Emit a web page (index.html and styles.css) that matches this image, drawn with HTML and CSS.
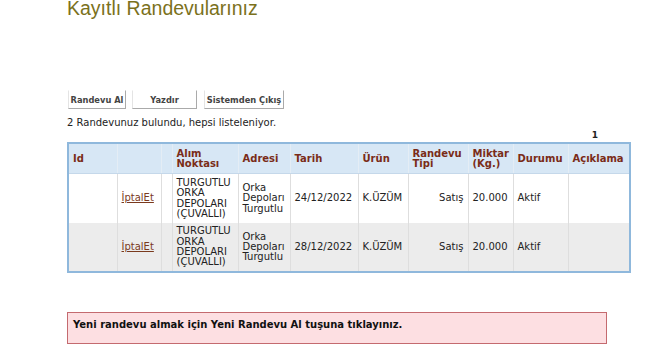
FILE: index.html
```html
<!DOCTYPE html>
<html lang="tr">
<head>
<meta charset="utf-8">
<link rel="stylesheet" href="styles.css">
</head>
<body>
<div class="page">
  <h1 class="title">Kayıtlı Randevularınız</h1>
  <div class="buttons">
    <button class="btn b1">Randevu Al</button>
    <button class="btn b2">Yazdır</button>
    <button class="btn b3">Sistemden Çıkış</button>
  </div>
  <div class="info">2 Randevunuz bulundu, hepsi listeleniyor.</div>
  <div class="pager"><span>1</span></div>
  <table class="grid">
    <colgroup>
      <col class="c1"><col class="c2"><col class="c3"><col class="c4"><col class="c5"><col class="c6"><col class="c7"><col class="c8"><col class="c9"><col class="c10"><col class="c11">
    </colgroup>
    <thead>
      <tr>
        <th>Id</th><th></th><th></th><th>Alım<br>Noktası</th><th>Adresi</th><th>Tarih</th><th>Ürün</th><th>Randevu<br>Tipi</th><th>Miktar<br>(Kg.)</th><th>Durumu</th><th>Açıklama</th>
      </tr>
    </thead>
    <tbody>
      <tr>
        <td></td><td><a href="#">İptalEt</a></td><td></td><td>TURGUTLU<br>ORKA<br>DEPOLARI<br>(ÇUVALLI)</td><td>Orka<br>Depoları<br>Turgutlu</td><td>24/12/2022</td><td>K.ÜZÜM</td><td class="r">Satış</td><td>20.000</td><td>Aktif</td><td></td>
      </tr>
      <tr class="alt">
        <td></td><td><a href="#">İptalEt</a></td><td></td><td>TURGUTLU<br>ORKA<br>DEPOLARI<br>(ÇUVALLI)</td><td>Orka<br>Depoları<br>Turgutlu</td><td>28/12/2022</td><td>K.ÜZÜM</td><td class="r">Satış</td><td>20.000</td><td>Aktif</td><td></td>
      </tr>
    </tbody>
  </table>
  <div class="msg">Yeni randevu almak için Yeni Randevu Al tuşuna tıklayınız.</div>
</div>
</body>
</html>
```
FILE: styles.css
```css
html, body {
  margin: 0;
  padding: 0;
  background: #fff;
}
body {
  font-family: "DejaVu Sans", Verdana, sans-serif;
  font-size: 10px;
  color: #222;
  overflow: hidden;
}
.page {
  padding-left: 67px;
  width: 563px;
}
.title {
  margin: -1px 0 0 0;
  font-family: "Liberation Sans", Arial, sans-serif;
  font-weight: normal;
  font-size: 19.5px;
  line-height: 18px;
  height: 18px;
  color: #7b711c;
}
.buttons {
  display: flex;
  margin-top: 73px;
  height: 19px;
}
.btn {
  font-family: "DejaVu Sans", Verdana, sans-serif;
  font-weight: bold;
  font-size: 8.3px;
  color: #444;
  background: #fff;
  border: 1px solid;
  border-color: #fff #aaa #aaa #e4e4e4;
  padding: 0;
  height: 19px;
  white-space: nowrap;
}
.b1 { width: 58px; margin-left: 1px; }
.b2 { width: 65px; margin-left: 6px; }
.b3 { width: 80px; margin-left: 7px; }
.info {
  margin-top: 8px;
  line-height: 12px;
}
.pager {
  text-align: right;
  font-weight: bold;
  font-size: 9px;
  line-height: 10px;
  margin-top: 1px;
  padding-right: 32px;
  height: 12px;
}
.grid {
  border-collapse: collapse;
  table-layout: fixed;
  width: 563px;
  border: 2px solid #8fb8dc;
}
.c1 { width: 49px; }
.c2 { width: 44px; }
.c3 { width: 11px; }
.c4 { width: 66px; }
.c5 { width: 52px; }
.c6 { width: 68px; }
.c7 { width: 50px; }
.c8 { width: 60px; }
.c9 { width: 45px; }
.c10 { width: 55px; }
.c11 { width: 62px; }
.grid th {
  background: #d7e7f5;
  color: #7a2c18;
  font-weight: bold;
  text-align: left;
  height: 29px;
  padding: 0 4px;
  line-height: 10px;
  border-left: 1px solid #e4edf5;
  border-bottom: 1px solid #c5d8ea;
}
.grid td {
  height: 49px;
  padding: 0 4px;
  line-height: 10.3px;
  border-left: 1px solid #dedede;
  vertical-align: middle;
}
.grid tr.alt td {
  background: #ececec;
  height: 48px;
}
.grid td.r { text-align: right; }
.grid a {
  color: #7a3a1e;
  text-decoration: underline;
}
.msg {
  margin-top: 39px;
  width: 533px;
  height: 30px;
  border: 1px solid #c46a6f;
  background: #fddfe2;
  font-weight: bold;
  color: #111;
  padding: 0 0 0 5px;
  line-height: 23px;
}
```
